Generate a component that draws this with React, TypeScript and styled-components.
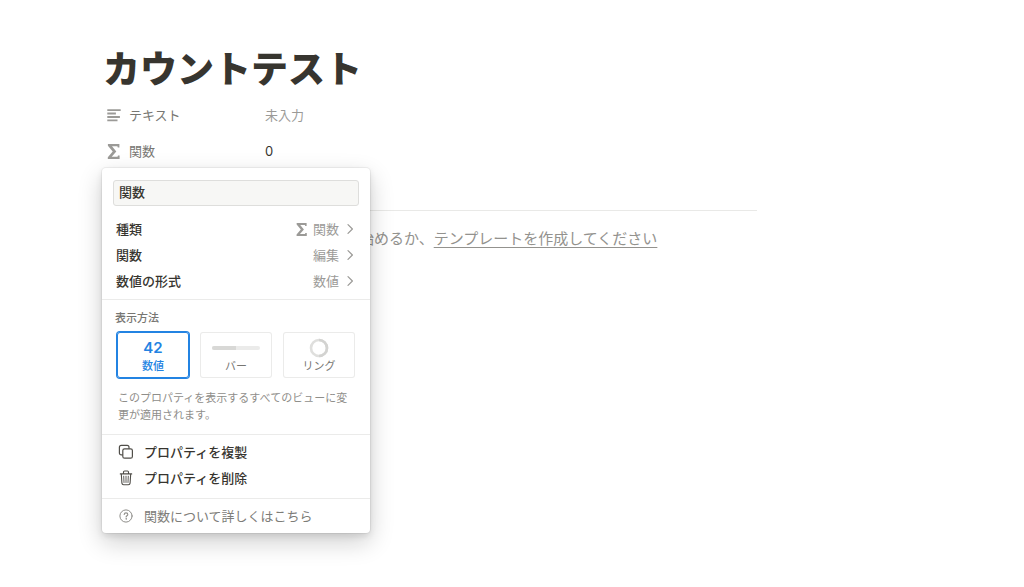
import React, { useState } from "react";
import styled, { createGlobalStyle } from "styled-components";

const GlobalStyle = createGlobalStyle`
  *, *::before, *::after { box-sizing: border-box; }
  body {
    margin: 0;
    background: #fff;
    color: #37352f;
    font-family: Inter, "Noto Sans CJK JP", sans-serif;
    font-size: 13px;
    line-height: 20px;
  }
  button, input { font: inherit; color: inherit; }
`;

const Page = styled.main`
  min-height: 100vh;
  padding: 46px 267px 48px 106px;
`;

const Title = styled.h1`
  margin: 0 0 3px -3px;
  font-size: 37px;
  line-height: 48px;
  font-weight: 900;
`;

const Property = styled.div`
  position: relative;
  display: flex;
  align-items: center;
  height: 36px;
`;

const PropertyName = styled.button`
  display: flex;
  align-items: center;
  gap: 8px;
  width: 159px;
  padding: 0;
  border: 0;
  background: none;
  color: #777672;
  text-align: left;
  cursor: pointer;

  svg { color: #9b9a97; }
`;

const PropertyValue = styled.span<{ $empty?: boolean }>`
  color: ${(p) => (p.$empty ? "#9b9a97" : "#37352f")};
`;

const PageRule = styled.hr`
  margin: 41px 0 16px;
  border: 0;
  border-top: 1px solid #e9e9e7;
`;

const Hint = styled.p`
  margin: 0;
  padding-left: 253px;
  color: #93928e;
  font-size: 15px;
  line-height: 24px;
  white-space: nowrap;
`;

const HintLink = styled.a`
  color: inherit;
  text-decoration: underline;
  text-underline-offset: 3px;
`;

const Popover = styled.div`
  position: absolute;
  z-index: 1;
  top: 35px;
  left: -4px;
  width: 268px;
  border-radius: 4px;
  background: #fff;
  box-shadow: 0 0 0 1px rgba(15, 15, 15, 0.05), 0 3px 6px rgba(15, 15, 15, 0.1),
    0 9px 24px rgba(15, 15, 15, 0.2);
`;

const Section = styled.section<{ $pad: string }>`
  display: flex;
  flex-direction: column;
  padding: ${(p) => p.$pad};

  & + & { border-top: 1px solid #ebebea; }
`;

const NameInput = styled.input`
  height: 26px;
  margin: 0 11px 10px;
  padding: 0 5px 3px;
  border: 1px solid #dededc;
  border-radius: 3px;
  background: #f7f7f5;
  font-weight: 500;
  outline: none;
`;

const MenuRow = styled.button<{ $muted?: boolean }>`
  display: flex;
  align-items: center;
  width: 100%;
  height: 26px;
  padding: 0 14px 0 16px;
  border: 0;
  background: none;
  color: ${(p) => (p.$muted ? "#7d7c78" : "#37352f")};
  font-weight: ${(p) => (p.$muted ? 400 : 500)};
  text-align: left;
  cursor: pointer;
`;

const SettingLabel = styled.span`
  flex: 1;
  margin-left: -2px;
`;

const SettingValue = styled.span`
  display: flex;
  align-items: center;
  gap: 5px;
  color: #9b9a97;
  font-weight: 400;
`;

const ActionLabel = styled.span`
  margin-left: 10px;
`;

const Group = styled.fieldset`
  display: flex;
  flex-direction: column;
  min-width: 0;
  margin: 0;
  padding: 0;
  border: 0;
`;

const GroupTitle = styled.legend`
  padding: 0 13px;
  color: #777672;
  font-size: 11px;
  font-weight: 500;
  line-height: 16px;
`;

const Cards = styled.div`
  display: flex;
  gap: 11px;
  margin: 6px 15px 12px;
`;

const Card = styled.label<{ $selected: boolean }>`
  position: relative;
  display: flex;
  flex: 1;
  flex-direction: column;
  align-items: center;
  height: 46px;
  padding-top: 6px;
  border-radius: 3px;
  box-shadow: ${(p) => (p.$selected ? "0 0 0 1px #2383e2, inset 0 0 0 1px #2383e2" : "inset 0 0 0 1px #ebebea")};
  color: ${(p) => (p.$selected ? "#2383e2" : "#777672")};
  font-size: 11px;
  font-weight: ${(p) => (p.$selected ? 500 : 400)};
  line-height: 16px;
  cursor: pointer;
`;

const CardRadio = styled.input`
  position: absolute;
  inset: 0;
  width: 100%;
  height: 100%;
  margin: 0;
  opacity: 0;
  cursor: pointer;
`;

const Preview = styled.span`
  display: flex;
  align-items: center;
  height: 20px;
  font-size: 15px;
  font-weight: 600;
`;

const Track = styled.span`
  width: 48px;
  height: 4px;
  border-radius: 2px;
  overflow: hidden;
  background: #ebebea;
`;

const Fill = styled.span`
  display: block;
  width: 50%;
  height: 100%;
  background: #d8d8d6;
`;

const Note = styled.p`
  margin: 0;
  padding: 0 16px;
  color: #8f8e8a;
  font-size: 11px;
  line-height: 17px;
`;

const TextIcon = () => (
  <svg width="15" height="14" viewBox="0 0 15 14" fill="currentColor" aria-hidden="true">
    <path d="M1.3 1.2h13.4v1.9H1.3zM1.3 4.6h8.6v1.9H1.3zM1.3 8h12.6v1.9H1.3zM1.3 11.4h10.2v1.9H1.3z" />
  </svg>
);

const SigmaIcon = ({ size }: { size: number }) => (
  <svg width={size} height={size} viewBox="0 0 15 15" fill="currentColor" aria-hidden="true">
    <path d="M1.9 0h11.5v3.4h-1.6l-.4-1.2H6l4.3 5.2-4.6 5.3h5.8l.5-1.3h1.6V15H1.8v-1.8l4.9-5.8-4.8-5.6z" />
  </svg>
);

const ChevronIcon = () => (
  <svg width="12" height="12" viewBox="0 0 12 12" fill="none" stroke="currentColor" strokeWidth="1.2" strokeLinecap="round" strokeLinejoin="round" aria-hidden="true">
    <path d="M4 1.6 8.4 6 4 10.4" />
  </svg>
);

const RingIcon = () => (
  <svg width="20" height="20" viewBox="0 0 20 20" fill="none" strokeWidth="2.6" aria-hidden="true">
    <circle cx="10" cy="10" r="8" stroke="#dfdfdd" />
    <path d="M10 2a8 8 0 0 1 0 16" stroke="#d3d3d1" />
  </svg>
);

const CopyIcon = () => (
  <svg width="16" height="16" viewBox="0 0 16 16" fill="none" stroke="#504e49" strokeWidth="1.2" aria-hidden="true">
    <rect x="4.8" y="4.8" width="9.6" height="9.4" rx="1.8" />
    <path d="M4.8 10.9H3.3a1.9 1.9 0 0 1-1.9-1.9V3.3c0-1.1.8-1.9 1.9-1.9h5.8c1.1 0 1.9.8 1.9 1.9v1.5" />
  </svg>
);

const TrashIcon = () => (
  <svg width="16" height="16" viewBox="0 0 16 16" fill="none" stroke="#504e49" strokeWidth="1.1" strokeLinecap="round" strokeLinejoin="round" aria-hidden="true">
    <path d="M2.3 3.9h11.4M5.5 3.7V2.1c0-.7.4-1.1 1.1-1.1h2.8c.7 0 1.1.4 1.1 1.1v1.6M3.3 4l.6 9.1c.1 1 .7 1.6 1.7 1.6h4.8c1 0 1.6-.6 1.7-1.6l.6-9.1" />
    <path d="m5.7 6.2.3 6.3M8 6.2v6.3M10.3 6.2l-.3 6.3" strokeWidth=".9" />
  </svg>
);

const HelpIcon = () => (
  <svg width="16" height="16" viewBox="0 0 16 16" fill="none" stroke="#8f8e8a" strokeWidth="1" strokeLinecap="round" strokeLinejoin="round" aria-hidden="true">
    <circle cx="8" cy="8" r="6.1" />
    <path d="M6.2 6.5C6.3 5.4 7 4.9 8 4.9s1.8.6 1.8 1.5c0 1.3-1.7 1.3-1.7 2.5" strokeWidth="1.1" />
    <circle cx="8.1" cy="10.9" r=".25" />
  </svg>
);

const settings = [
  { label: "種類", value: "関数", sigma: true },
  { label: "関数", value: "編集" },
  { label: "数値の形式", value: "数値" },
];

const displays = [
  { id: "number", label: "数値", preview: "42" },
  { id: "bar", label: "バー", preview: <Track><Fill /></Track> },
  { id: "ring", label: "リング", preview: <RingIcon /> },
];

function PropertyMenu() {
  const [name, setName] = useState("関数");
  const [display, setDisplay] = useState("number");

  return (
    <Popover role="dialog" aria-label="プロパティ">
      <Section $pad="12px 0 5px">
        <NameInput aria-label="プロパティ名" value={name} onChange={(e) => setName(e.target.value)} />
        {settings.map((s) => (
          <MenuRow type="button" key={s.label}>
            <SettingLabel>{s.label}</SettingLabel>
            <SettingValue>
              {s.sigma && <SigmaIcon size={13} />}
              {s.value}
              <ChevronIcon />
            </SettingValue>
          </MenuRow>
        ))}
      </Section>
      <Section $pad="10px 0 10px">
        <Group>
          <GroupTitle>表示方法</GroupTitle>
          <Cards>
            {displays.map((d) => (
              <Card key={d.id} $selected={display === d.id}>
                <CardRadio type="radio" name="display" checked={display === d.id} onChange={() => setDisplay(d.id)} />
                <Preview>{d.preview}</Preview>
                {d.label}
              </Card>
            ))}
          </Cards>
        </Group>
        <Note>このプロパティを表示するすべてのビューに変更が適用されます。</Note>
      </Section>
      <Section $pad="4px 0 7px">
        <MenuRow type="button"><CopyIcon /><ActionLabel>プロパティを複製</ActionLabel></MenuRow>
        <MenuRow type="button"><TrashIcon /><ActionLabel>プロパティを削除</ActionLabel></MenuRow>
      </Section>
      <Section $pad="4px 0 4px">
        <MenuRow type="button" $muted><HelpIcon /><ActionLabel>関数について詳しくはこちら</ActionLabel></MenuRow>
      </Section>
    </Popover>
  );
}

export default function App() {
  return (
    <>
      <GlobalStyle />
      <Page>
        <Title>カウントテスト</Title>
        <Property>
          <PropertyName type="button"><TextIcon />テキスト</PropertyName>
          <PropertyValue $empty>未入力</PropertyValue>
        </Property>
        <Property>
          <PropertyName type="button"><SigmaIcon size={15} />関数</PropertyName>
          <PropertyValue>0</PropertyValue>
          <PropertyMenu />
        </Property>
        <PageRule />
        <Hint>
          始めるか、<HintLink href="#template">テンプレートを作成してください</HintLink>
        </Hint>
      </Page>
    </>
  );
}
